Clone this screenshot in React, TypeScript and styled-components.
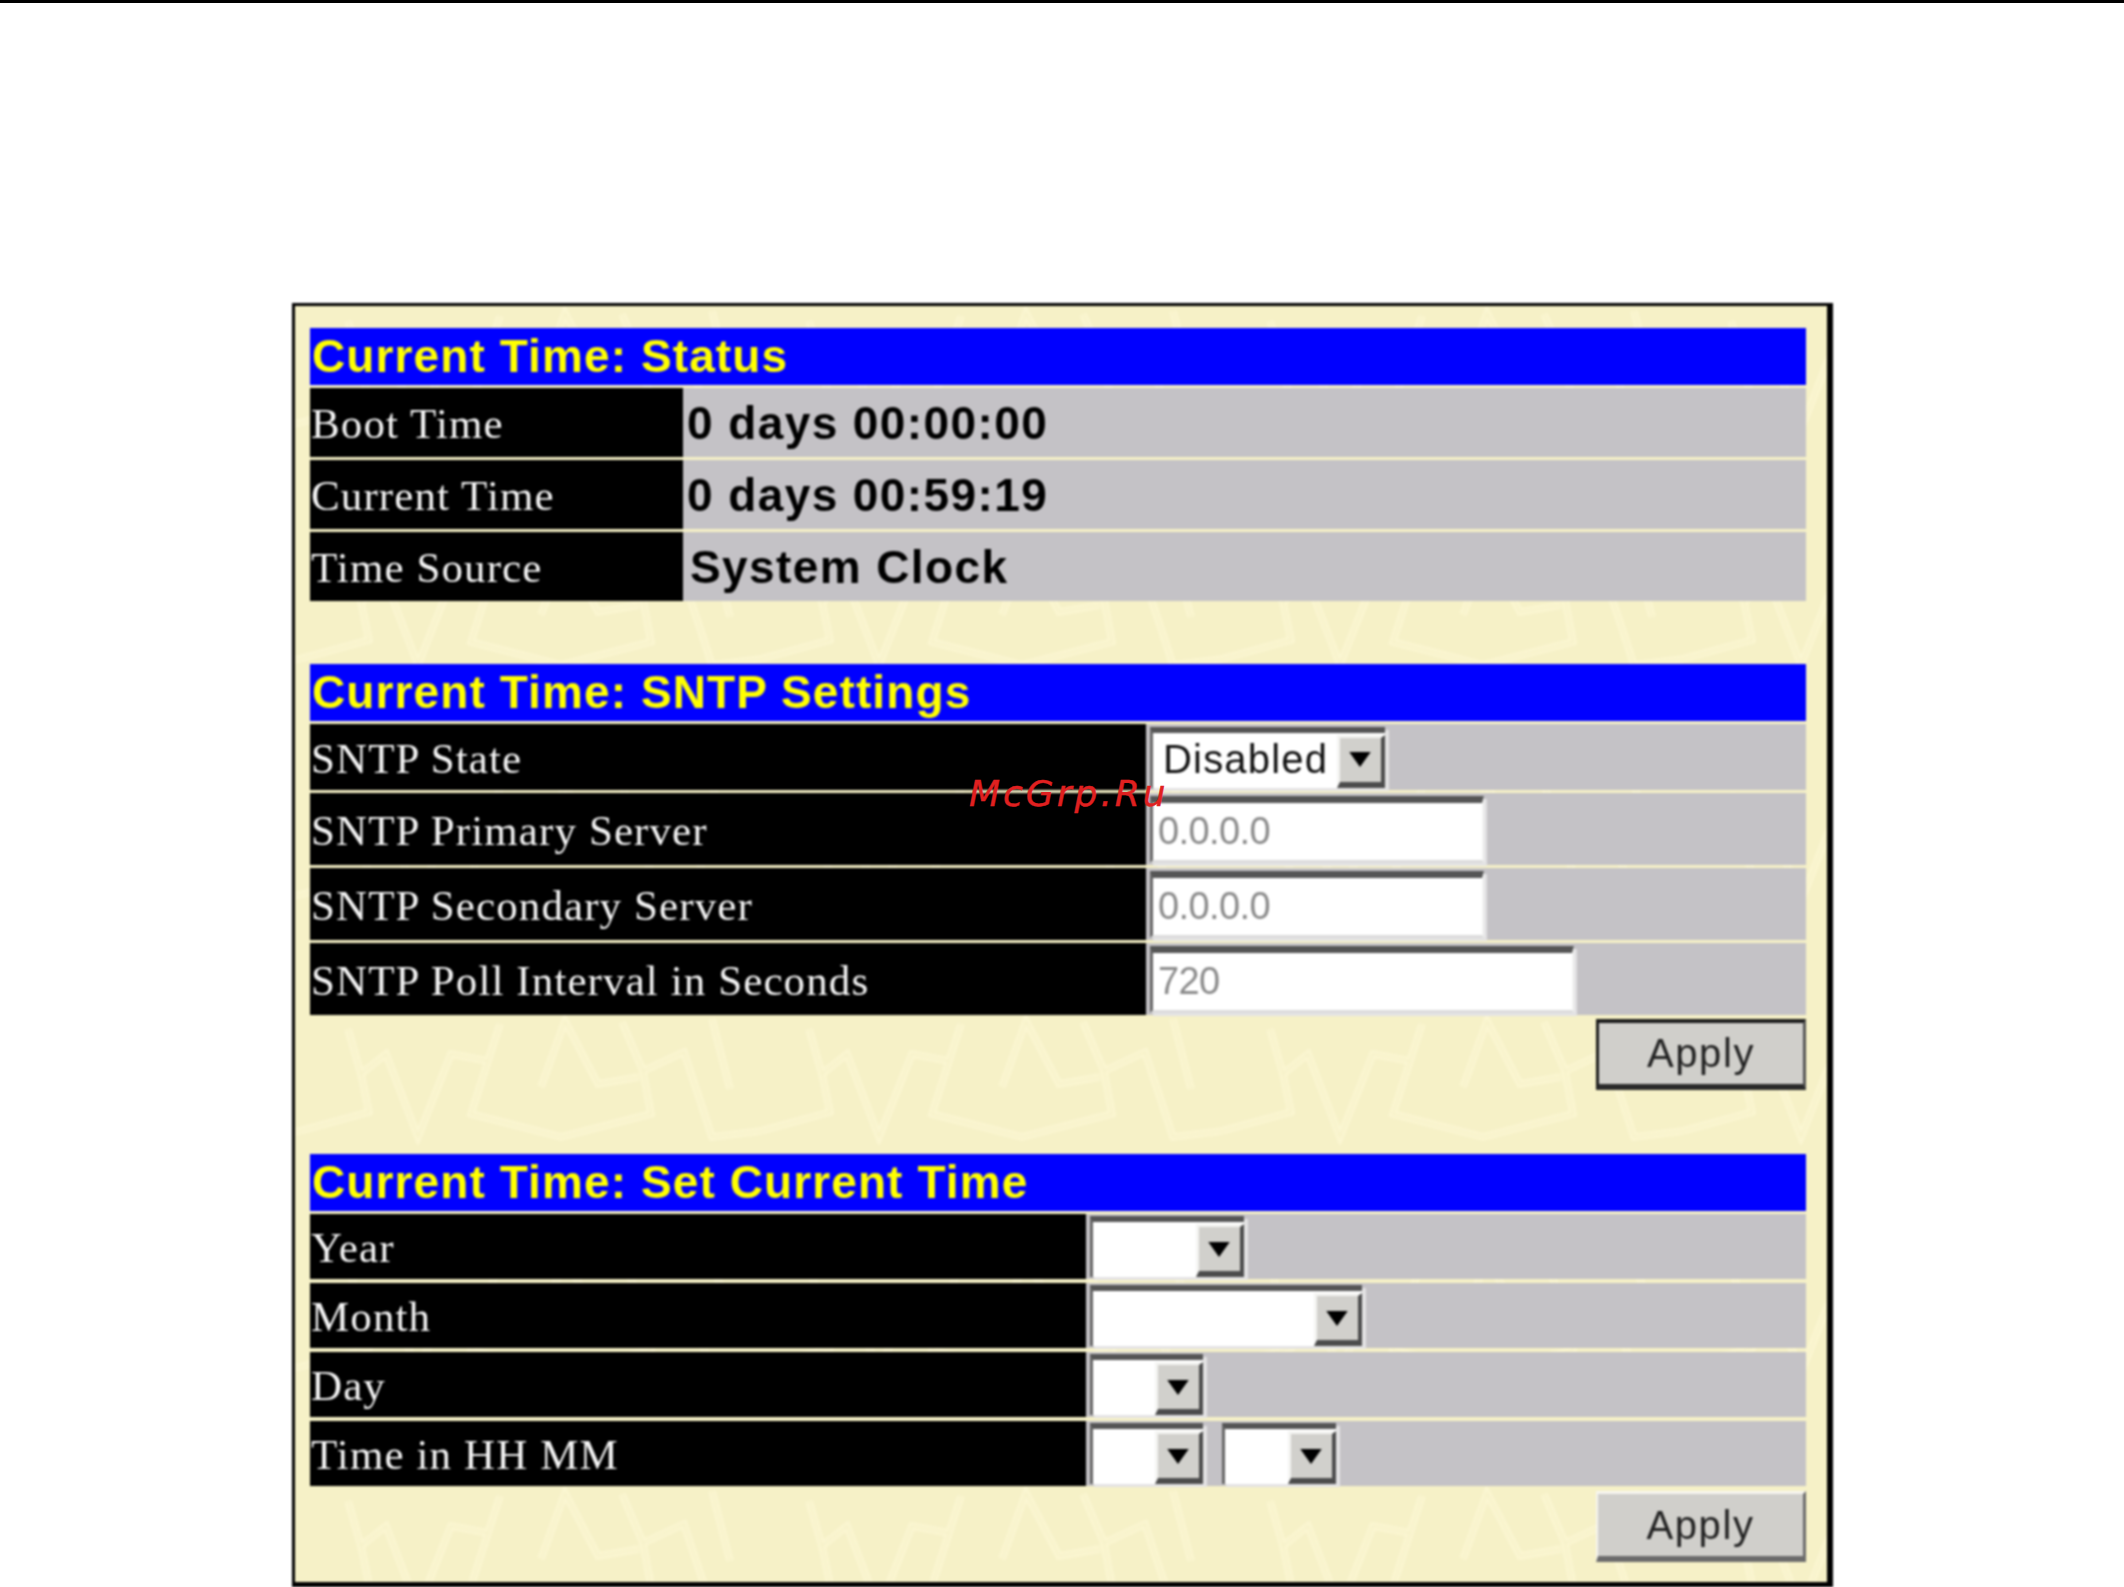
import * as React from "react";
import styled, { createGlobalStyle } from "styled-components";

const GlobalStyle = createGlobalStyle`
  html, body {
    margin: 0;
    padding: 0;
    background: #fff;
  }
  body {
    width: 2124px;
    height: 1587px;
    overflow: hidden;
    font-family: "Liberation Sans", Arial, sans-serif;
  }
`;

const Page = styled.div`
  position: relative;
  width: 2124px;
  height: 1587px;
  border-top: 3px solid #000;
  box-sizing: border-box;
  padding: 300px 0 0 292px;
`;

const Panel = styled.div`
  position: relative;
  box-sizing: border-box;
  width: 1541px;
  height: 1284px;
  padding: 22px 21px 0 15px;
  background: #f6f1c7;
  border-style: solid;
  border-color: #000;
  border-width: 3px 6px 5px 3px;
  filter: blur(0.8px);
  overflow: hidden;
`;

const Texture = styled.svg`
  position: absolute;
  inset: 0;
  width: 100%;
  height: 100%;
  filter: blur(1px);
`;

const Content = styled.div`
  position: relative;
  display: flex;
  flex-direction: column;
`;

const Section = styled.section<{ $after: number }>`
  display: flex;
  flex-direction: column;
  margin-bottom: ${(p) => p.$after}px;
`;

const TitleBar = styled.h2`
  margin: 0 0 3px;
  height: 57px;
  padding-left: 2px;
  background: #0000ff;
  color: #ffff00;
  font: bold 46px/57px "Liberation Sans", Arial, sans-serif;
  letter-spacing: 1.1px;
`;

const Rows = styled.div<{ $gap: number }>`
  display: flex;
  flex-direction: column;
  gap: ${(p) => p.$gap}px;
`;

const Row = styled.div<{ $labelWidth: number; $height: number }>`
  display: grid;
  grid-template-columns: ${(p) => p.$labelWidth}px 1fr;
  height: ${(p) => p.$height}px;
`;

const Label = styled.div`
  background: #000;
  color: #f4f4f4;
  display: flex;
  align-items: center;
  padding: 2px 0 0 1px;
  font: 43px "Liberation Serif", "Times New Roman", serif;
  letter-spacing: 1.1px;
  white-space: nowrap;
`;

const Value = styled.div<{ $inset?: number }>`
  background: #c4c2c6;
  display: flex;
  align-items: center;
  gap: 19px;
  padding-left: ${(p) => p.$inset ?? 4}px;
  color: #000;
  font: bold 46px "Liberation Sans", Arial, sans-serif;
  letter-spacing: 1.4px;
  white-space: nowrap;
`;

const SelectBox = styled.div<{ $width: number }>`
  display: flex;
  box-sizing: border-box;
  width: ${(p) => p.$width}px;
  height: 61px;
  background: #fff;
  border-style: solid;
  border-color: #555 transparent transparent #666;
  border-width: 6px 0 0 3px;
  box-shadow: 4px 3px 0 #e4e3e4;
`;

const SelectText = styled.span`
  flex: 1;
  padding: 1px 0 0 10px;
  font: 40px/50px "Liberation Sans", Arial, sans-serif;
  letter-spacing: 1.2px;
  color: #111;
`;

const ArrowButton = styled.span`
  display: flex;
  align-items: center;
  justify-content: center;
  box-sizing: border-box;
  width: 48px;
  margin-top: 2px;
  padding-right: 2px;
  background: #d1d0cc;
  border-style: solid;
  border-color: #f4f4f2 #4c4c4c #4c4c4c #f4f4f2;
  border-width: 3px 4px 6px 3px;
`;

const ArrowIcon = styled.svg`
  width: 22px;
  height: 15px;
  fill: #000;
`;

const TextField = styled.div<{ $width: number }>`
  box-sizing: border-box;
  width: ${(p) => p.$width}px;
  height: 67px;
  padding: 0 0 0 5px;
  background: #fff;
  border-style: solid;
  border-color: #555 #f2f2f2 #dcdcdc #666;
  border-width: 7px 2px 3px 3px;
  box-shadow: 3px 3px 0 #e4e3e4;
  color: #8b8b8b;
  font: 38px/56px "Liberation Sans", Arial, sans-serif;
  letter-spacing: -0.6px;
`;

const ApplyRow = styled.div<{ $top: number }>`
  display: flex;
  justify-content: flex-end;
  margin-top: ${(p) => p.$top}px;
`;

const ApplyButton = styled.button<{ $flat?: boolean }>`
  box-sizing: border-box;
  width: 210px;
  height: 71px;
  padding: 0;
  background: #d0cfcb;
  color: #222;
  font: 40px "Liberation Sans", Arial, sans-serif;
  letter-spacing: 1.6px;
  border-style: solid;
  border-color: ${(p) =>
    p.$flat
      ? "#f6f5ef #6b6b6b #6b6b6b #f6f5ef"
      : "#1c1c1c #555 #2a2a2a #1c1c1c"};
  border-width: ${(p) => (p.$flat ? "3px 3px 6px 2px" : "4px 3px 6px 3px")};
`;

const Watermark = styled.div`
  position: absolute;
  left: 969px;
  top: 770px;
  color: #e02020;
  font: italic 36px "DejaVu Sans", sans-serif;
  letter-spacing: 3px;
  white-space: nowrap;
  -webkit-text-stroke: 0.4px #e02020;
`;

const Arrow = () => (
  <ArrowIcon viewBox="0 0 20 14">
    <path d="M0 0h20L10 14z" />
  </ArrowIcon>
);

const Select = ({ width, text }: { width: number; text?: string }) => (
  <SelectBox $width={width}>
    <SelectText>{text}</SelectText>
    <ArrowButton>
      <Arrow />
    </ArrowButton>
  </SelectBox>
);

const statusRows = [
  { name: "Boot Time", value: "0 days 00:00:00", inset: 4 },
  { name: "Current Time", value: "0 days 00:59:19", inset: 4 },
  { name: "Time Source", value: "System Clock", inset: 7 },
];

const weave =
  "M0 117L69 98L61 60L86 40L118 123L151 40L188 47L171 100L261 123L351 100L343 57L384 38L412 123L461 117M241 73L265 7L298 70L339 63M48 15L61 60M200 10L188 47M322 8L343 57M412 5L430 75";

const App: React.FC = () => {
  return (
    <Page>
      <GlobalStyle />
      <Panel>
        <Texture aria-hidden="true">
          <defs>
            <pattern
              id="weave"
              width="461"
              height="236"
              patternUnits="userSpaceOnUse"
              patternTransform="translate(5 0)"
            >
              <path fill="none" stroke="#fcf7d4" strokeWidth="7" d={weave} />
              <path fill="none" stroke="#f6f1c7" strokeWidth="2" d={weave} />
            </pattern>
          </defs>
          <rect width="100%" height="100%" fill="url(#weave)" />
        </Texture>
        <Content>
          <Section $after={63}>
            <TitleBar>Current Time: Status</TitleBar>
            <Rows $gap={3}>
              {statusRows.map((row) => (
                <Row key={row.name} $labelWidth={373} $height={69}>
                  <Label>{row.name}</Label>
                  <Value $inset={row.inset}>{row.value}</Value>
                </Row>
              ))}
            </Rows>
          </Section>

          <Section $after={64}>
            <TitleBar>Current Time: SNTP Settings</TitleBar>
            <Rows $gap={3}>
              <Row $labelWidth={836} $height={66}>
                <Label>SNTP State</Label>
                <Value>
                  <Select width={235} text="Disabled" />
                </Value>
              </Row>
              <Row $labelWidth={836} $height={72}>
                <Label>SNTP Primary Server</Label>
                <Value>
                  <TextField $width={334}>0.0.0.0</TextField>
                </Value>
              </Row>
              <Row $labelWidth={836} $height={72}>
                <Label>SNTP Secondary Server</Label>
                <Value>
                  <TextField $width={334}>0.0.0.0</TextField>
                </Value>
              </Row>
              <Row $labelWidth={836} $height={72}>
                <Label>SNTP Poll Interval in Seconds</Label>
                <Value>
                  <TextField $width={424}>720</TextField>
                </Value>
              </Row>
            </Rows>
            <ApplyRow $top={4}>
              <ApplyButton>Apply</ApplyButton>
            </ApplyRow>
          </Section>

          <Section $after={0}>
            <TitleBar>Current Time: Set Current Time</TitleBar>
            <Rows $gap={4}>
              <Row $labelWidth={776} $height={65}>
                <Label>Year</Label>
                <Value>
                  <Select width={154} />
                </Value>
              </Row>
              <Row $labelWidth={776} $height={65}>
                <Label>Month</Label>
                <Value>
                  <Select width={272} />
                </Value>
              </Row>
              <Row $labelWidth={776} $height={65}>
                <Label>Day</Label>
                <Value>
                  <Select width={113} />
                </Value>
              </Row>
              <Row $labelWidth={776} $height={65}>
                <Label>Time in HH MM</Label>
                <Value>
                  <Select width={113} />
                  <Select width={114} />
                </Value>
              </Row>
            </Rows>
            <ApplyRow $top={5}>
              <ApplyButton $flat>Apply</ApplyButton>
            </ApplyRow>
          </Section>
        </Content>
      </Panel>
      <Watermark>McGrp.Ru</Watermark>
    </Page>
  );
};

export default App;
